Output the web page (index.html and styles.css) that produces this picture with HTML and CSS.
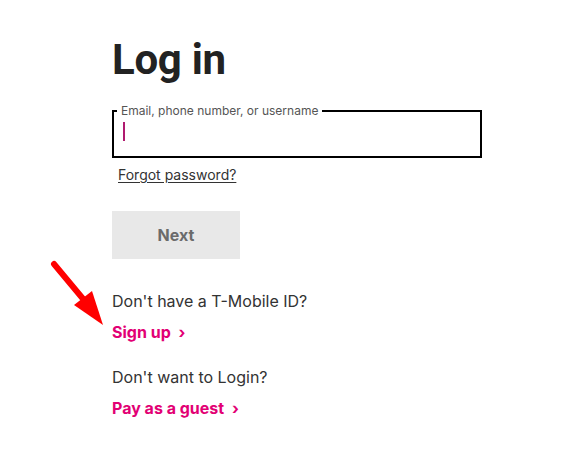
FILE: index.html
```html
<!DOCTYPE html>
<html lang="en">
<head>
    <meta charset="UTF-8">
    <title>Log in</title>
    <link rel="stylesheet" href="styles.css">
</head>
<body>
    <div class="login">
        <h1 class="title">Log in</h1>
        <fieldset class="field">
            <legend>Email, phone number, or username</legend>
            <div class="field-input"><span class="caret"></span></div>
        </fieldset>
        <a class="forgot" href="#">Forgot password?</a>
        <button class="next-button">Next</button>

        <div class="group">
            <p class="prompt">Don't have a T-Mobile ID?</p>
            <a class="cta" href="#">Sign up <span class="chevron">&#8250;</span></a>
        </div>
        <div class="group">
            <p class="prompt">Don't want to Login?</p>
            <a class="cta" href="#">Pay as a guest <span class="chevron">&#8250;</span></a>
        </div>
    </div>

    <!-- red annotation arrow -->
    <svg class="arrow" width="580" height="450" viewBox="0 0 580 450">
        <line x1="54" y1="264" x2="84" y2="300" stroke="#ff0000" stroke-width="6" stroke-linecap="round"/>
        <polygon points="74,305 92,291 103,325" fill="#ff0000"/>
    </svg>
</body>
</html>
```

FILE: styles.css
```css
/* Basic reset */
* {
    margin: 0;
    padding: 0;
    box-sizing: border-box;
}

body {
    font-family: Inter, 'Noto Sans', sans-serif;
    background-color: #fff;
    color: #262626;
    width: 580px;
    height: 450px;
    position: relative;
    overflow: hidden;
}

.login {
    padding: 35px 0 0 112px;
    display: flex;
    flex-direction: column;
    align-items: flex-start;
}

.title {
    font-family: Roboto, sans-serif;
    font-size: 42px;
    font-weight: 700;
    line-height: 50px;
    color: #222;
    letter-spacing: -0.3px;
}

.field {
    width: 370px;
    margin-top: 19px;
    border: 2px solid #000;
    padding: 0;
}

.field legend {
    margin-left: 3px;
    padding: 0 4px;
    font-size: 12px;
    line-height: 13px;
    color: #555;
}

.field-input {
    height: 39px;
    padding: 5px 0 0 9px;
}

.caret {
    display: block;
    width: 1.5px;
    height: 19px;
    background-color: #b01a6f;
}

.forgot {
    margin: 7px 0 0 6px;
    font-size: 14px;
    line-height: 20px;
    color: #333;
    text-decoration: underline;
    text-underline-offset: 2px;
}

.next-button {
    margin-top: 26px;
    width: 128px;
    height: 48px;
    border: none;
    background-color: #e8e8e8;
    font-family: Inter, sans-serif;
    font-size: 16px;
    font-weight: 700;
    color: #6b6b6b;
}

.group {
    display: flex;
    flex-direction: column;
    align-items: flex-start;
    gap: 7px;
}

.group:first-of-type {
    margin-top: 30px;
}

.group + .group {
    margin-top: 21px;
}

.prompt {
    font-size: 16px;
    line-height: 24px;
    color: #333;
}

.cta {
    font-size: 16px;
    font-weight: 700;
    line-height: 24px;
    color: #e20074;
    text-decoration: none;
}

.chevron {
    margin-left: 4px;
    font-weight: 700;
}

.arrow {
    position: absolute;
    top: 0;
    left: 0;
    pointer-events: none;
}
```
